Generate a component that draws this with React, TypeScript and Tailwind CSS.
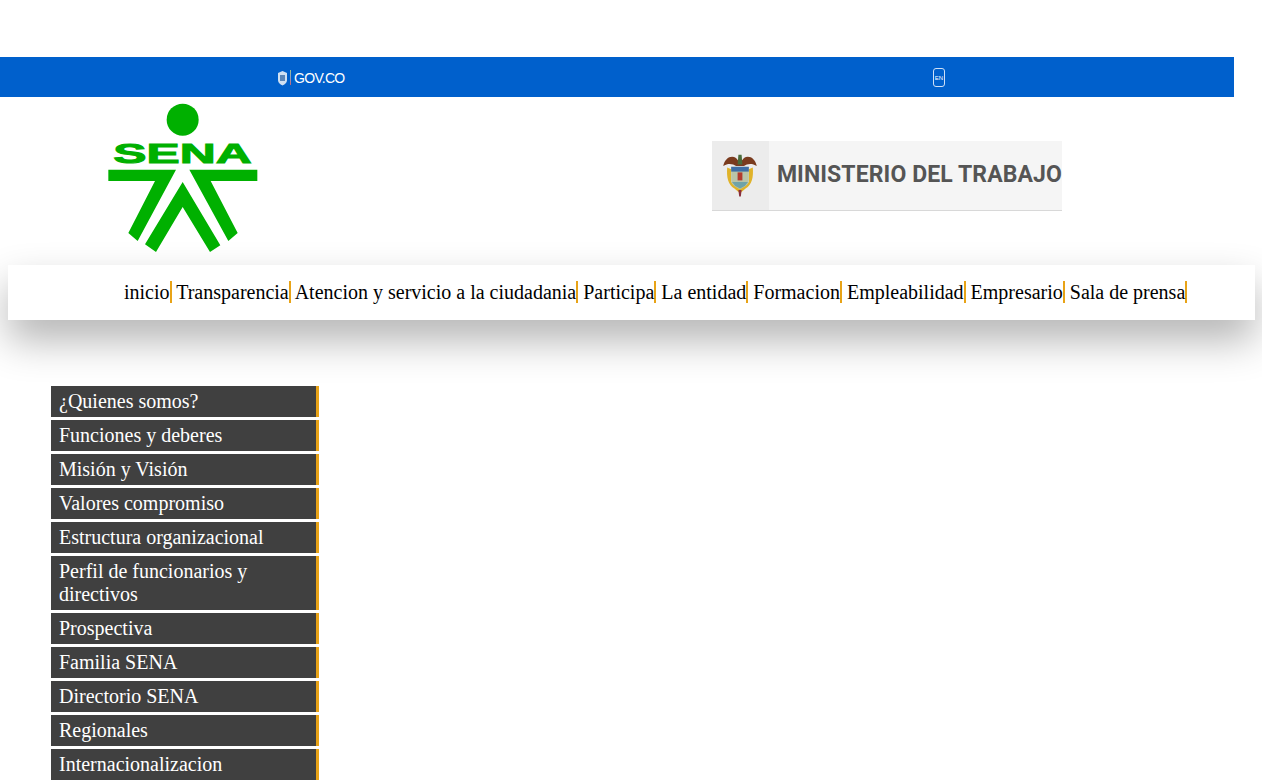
const navItems = ["inicio","Transparencia","Atencion y servicio a la ciudadania","Participa","La entidad","Formacion","Empleabilidad","Empresario","Sala de prensa"];
const menuItems = ["¿Quienes somos?","Funciones y deberes","Misión y Visión","Valores compromiso","Estructura organizacional","Perfil de funcionarios y directivos","Prospectiva","Familia SENA","Directorio SENA","Regionales","Internacionalizacion"];

function SenaLogo() {
  return (
    <svg width="175" height="165" viewBox="0 0 525 495" className="block shrink-0">
      <circle cx="263" cy="68" r="48" fill="#00b000" />
      <text x="55" y="199" textLength="415" lengthAdjust="spacingAndGlyphs" fontFamily="Liberation Sans" fontWeight="700" fontSize="84" fill="#00b000" stroke="#00b000" strokeWidth="3">SENA</text>
      <polygon points="40,218 243,218 128,432 100,408 180,252 40,252" fill="#00b000" />
      <polygon points="283,218 487,218 487,252 347,252 428,408 400,432" fill="#00b000" />
      <polygon points="263,255 376,445 345,465 263,330 183,465 150,442" fill="#00b000" />
    </svg>
  );
}

function Coat({ w, h }: { w: number; h: number }) {
  return (
    <svg width={w} height={h} viewBox="0 0 50 60" className="block shrink-0">
      <path d="M4 20 C6 10 14 6 20 10 L25 16 L30 10 C36 6 44 10 46 20 C40 16 34 17 30 20 L20 20 C16 17 10 16 4 20Z" fill="#7a3b1e" />
      <path d="M23 6 L27 6 L28 18 L22 18Z" fill="#4a6b3a" />
      <path d="M9 22 C8 34 10 44 18 48 L25 54 L32 48 C40 44 42 34 41 22 L36 24 L36 40 L25 48 L14 40 L14 24Z" fill="#e0b32a" />
      <path d="M14 21 L36 21 L36 38 C36 44 30 46 25 49 C20 46 14 44 14 38Z" fill="#b9c4a8" />
      <rect x="14" y="21" width="22" height="6" fill="#3f6ea5" />
      <rect x="22" y="28" width="6" height="10" fill="#b23a2e" />
      <path d="M15 40 L35 40 L31 45 L25 48 L19 45Z" fill="#6fa3a8" />
      <path d="M23 50 L27 50 L26 58 L24 58Z" fill="#8a2f3a" />
    </svg>
  );
}

export default function App() {
  return (
    <div className="h-[780px] overflow-hidden bg-white text-[20px] leading-[23px] text-black font-['Liberation_Serif',serif]">
      <div className="mt-[57px] h-10 w-[1234px] bg-[#0060cc] flex items-center pt-px pl-[277px] pt-0 text-white">
        <div className="flex items-center w-[656px]">
          <svg width="11" height="16" viewBox="0 0 11 16" className="block shrink-0">
            <path d="M1 3 L5.5 1 L10 3 L10 10 C10 13 7.5 14.5 5.5 15.5 C3.5 14.5 1 13 1 10Z" fill="#cfe0f2" />
            <rect x="3" y="5" width="5" height="6" fill="#5b86b8" />
          </svg>
          <span className="ml-[2px] w-px h-[15px] bg-gradient-to-b from-[#9fc08f] via-[#8aa0c0] to-[#c0607a]"></span>
          <span className="ml-[3px] text-[14px] leading-none tracking-[-0.7px] font-['Liberation_Sans',sans-serif]">GOV.CO</span>
        </div>
        <div className="w-3 h-[19px] rounded-[3px] border border-[#cfe0f7] flex items-center justify-center text-[6px] leading-none font-['Liberation_Sans',sans-serif]">EN</div>
      </div>

      <header className="h-[168px] flex pl-[95px] pt-0">
        <SenaLogo />
        <div className="ml-[442px] mt-[44px] w-[350px] h-[70px] flex bg-[#f5f5f5] border-b border-[#d8d8d8]">
          <div className="w-[59px] bg-[#ececec] flex items-center justify-center pr-px pb-[3px]">
            <Coat w={40} h={48} />
          </div>
          <div className="pl-2 pb-[2px] flex items-center whitespace-nowrap text-[23px] font-bold text-[#555555] font-['Roboto',sans-serif] tracking-[0.1px]">MINISTERIO DEL TRABAJO</div>
        </div>
      </header>

      <nav className="mx-2 h-[55px] w-[1247px] bg-white pl-[116px] pt-4 whitespace-nowrap shadow-[0_20px_40px_rgba(0,0,0,0.3)]">
        {navItems.map((n, i) => (
          <span key={n}>
            <a className="border-r-2 border-[#e8a317]">{n}</a>
            {i < navItems.length - 1 ? " " : ""}
          </span>
        ))}
      </nav>

      <aside className="mt-[66px] ml-[51px] w-[268px] flex flex-col gap-[3px]">
        {menuItems.map((m) => (
          <a key={m} className="block bg-[#404040] text-white border-r-[3px] border-[#e8a317] py-1 pl-2 pr-2">{m}</a>
        ))}
      </aside>
    </div>
  );
}
